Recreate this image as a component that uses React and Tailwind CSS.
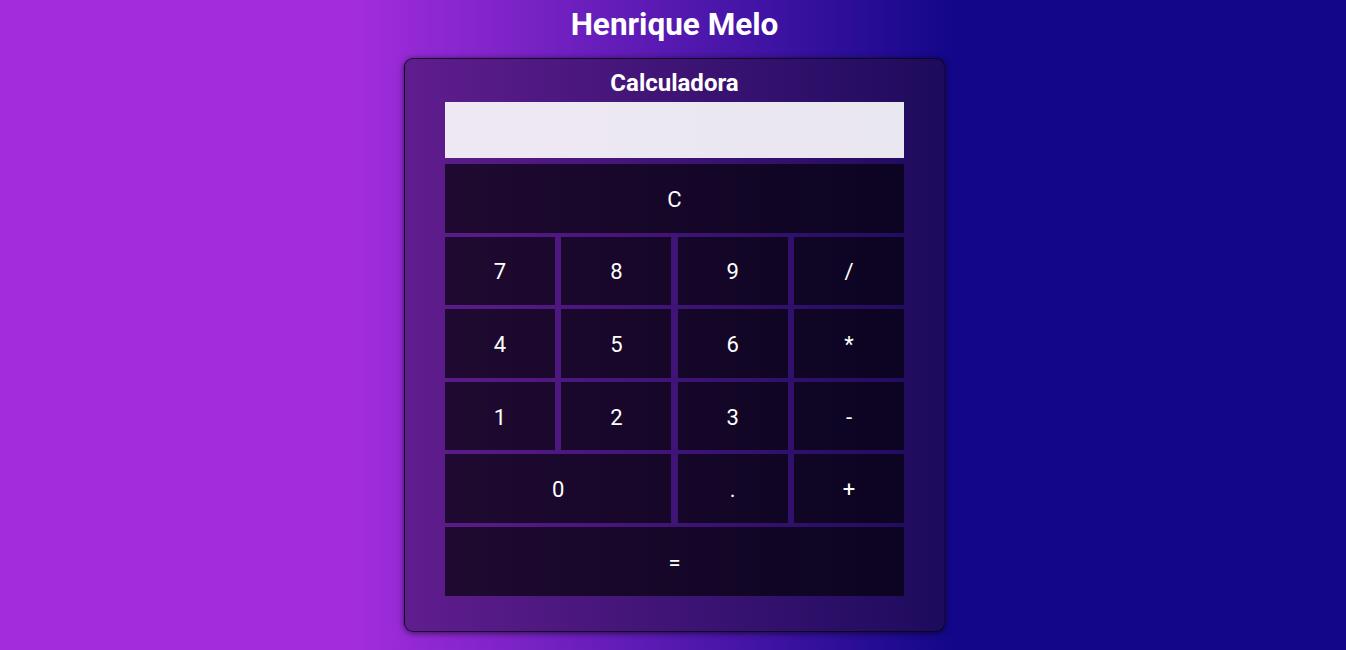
export default function App() {
  const btn =
    "h-[68.6px] pt-[2px] bg-black/65 text-white text-[22px] flex items-center justify-center font-['Roboto',sans-serif]";
  return (
    <div className="min-h-[650px] w-full pl-[3px] bg-[linear-gradient(to_right,#a32ddd_26%,#120789_71%)] font-['Roboto',sans-serif] flex flex-col items-center">
      <h1 className="text-white font-bold text-[31.5px] leading-[38px] mt-[6px] mb-[14px]">
        Henrique Melo
      </h1>
      <div className="w-[541px] h-[574px] rounded-[9px] border border-black/70 shadow-[0_1px_6px_rgba(0,0,0,0.6)] bg-[linear-gradient(to_right,#601d8e,#1d0b5d)] flex flex-col items-center pt-[9px]">
        <h2 className="text-white font-bold text-[24px] leading-[30px] mb-[4px]">
          Calculadora
        </h2>
        <div className="w-[459px] h-[56px] bg-white/90" />
        <div className="w-[459px] mt-[6px] grid grid-cols-4 gap-x-[6.33px] gap-y-[4px]">
          <div className={btn + " col-span-4"}>C</div>
          <div className={btn}>7</div>
          <div className={btn}>8</div>
          <div className={btn}>9</div>
          <div className={btn}>/</div>
          <div className={btn}>4</div>
          <div className={btn}>5</div>
          <div className={btn}>6</div>
          <div className={btn}>*</div>
          <div className={btn}>1</div>
          <div className={btn}>2</div>
          <div className={btn}>3</div>
          <div className={btn}>-</div>
          <div className={btn + " col-span-2"}>0</div>
          <div className={btn}>.</div>
          <div className={btn}>+</div>
          <div className={btn + " col-span-4"}>=</div>
        </div>
      </div>
    </div>
  );
}
